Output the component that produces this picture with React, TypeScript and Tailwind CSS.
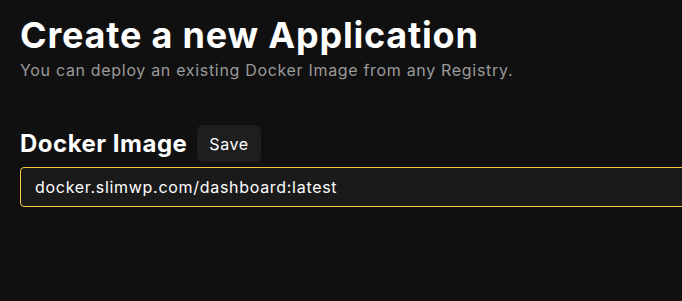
export default function App() {
  return (
    <div
      className="min-h-screen w-full overflow-hidden bg-[#101010] text-white"
      style={{ fontFamily: 'Inter, "Noto Sans", sans-serif' }}
    >
      <div className="pl-5 pt-[15px]">
        <h1 className="text-4xl font-bold leading-10 tracking-[0.8px]">Create a new Application</h1>
        <p className="mt-[3px] text-base leading-6 tracking-[0.68px] text-[#9a9a9a]">
          You can deploy an existing Docker Image from any Registry.
        </p>

        <div className="mt-[43px] flex items-center gap-2.5">
          <h2 className="text-2xl font-bold leading-8 tracking-[0.5px]">Docker Image</h2>
          <button className="h-[37px] rounded-md bg-[#1e1e1e] px-3 text-base tracking-[0.6px] text-white">
            Save
          </button>
        </div>

        <div className="mt-[5px] w-[720px]">
          <input
            readOnly
            value="docker.slimwp.com/dashboard:latest"
            className="h-10 w-full rounded border border-[#f6c944] bg-[#1a1a1a] px-3.5 text-base tracking-[0.7px] text-white outline-none"
            style={{ fontFamily: 'Inter, "Noto Sans", sans-serif' }}
          />
        </div>
      </div>
    </div>
  )
}
